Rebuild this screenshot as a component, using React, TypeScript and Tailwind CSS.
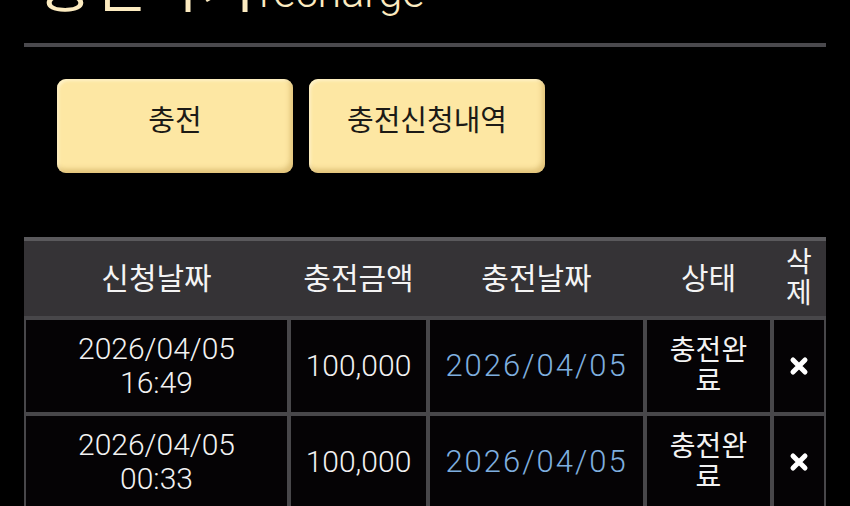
import React from "react";

const font = { fontFamily: 'Roboto, "Noto Sans CJK KR", sans-serif' };

function XIcon() {
  return (
    <svg width="20" height="20" viewBox="0 0 20 20">
      <path d="M4 4 L16 16 M16 4 L4 16" stroke="#ffffff" strokeWidth="5" strokeLinecap="round" fill="none" />
    </svg>
  );
}

const rows = [
  { date: "2026/04/05", time: "16:49", amount: "100,000", done: "2026/04/05", status: "충전완료" },
  { date: "2026/04/05", time: "00:33", amount: "100,000", done: "2026/04/05", status: "충전완료" },
];

const cols = "grid grid-cols-[261px_135px_213px_123px_50px] gap-x-[4px]";

export default function App() {
  return (
    <div className="w-[850px] h-[506px] overflow-hidden bg-black" style={font}>
      <div className="px-[24px]">
        <div className="-mt-[84px] h-[127px] flex items-end pb-[21px] pl-[14px] text-[#fcebc0]">
          <div className="flex items-baseline">
            <span className="text-[59px] leading-[60px]">충전하기</span>
            <span className="text-[43px] leading-[60px] font-light ml-[4px]">recharge</span>
          </div>
        </div>
        <div className="h-[4px] bg-[#4a494d]" />
        <div className="flex gap-[16px] pl-[33px] mt-[32px]">
          {["충전", "충전신청내역"].map((t) => (
            <div
              key={t}
              className="w-[236px] h-[94px] rounded-[9px] bg-[#fde7a3] flex items-center justify-center pb-[8px] text-[29px] text-[#1c1a16] shadow-[inset_-3px_-4px_5px_rgba(190,150,70,0.45),inset_2px_2px_3px_rgba(255,250,225,0.6)]"
            >
              {t}
            </div>
          ))}
        </div>
        <div className="mt-[64px] bg-[#48474a] w-[802px]">
          <div className={`${cols} px-[2px] h-[79px] bg-[#353336] border-t-[4px] border-[#5a595c] text-[30px] text-[#f4f4f4] items-center text-center`}>
            <div>신청날짜</div>
            <div>충전금액</div>
            <div>충전날짜</div>
            <div>상태</div>
            <div className="text-[28px] leading-[31px] pb-[2px]">
              삭<br />제
            </div>
          </div>
          <div className="px-[2px] pt-[4px] flex flex-col gap-[4px]">
            {rows.map((r, i) => (
              <div key={i} className={`${cols} h-[92px] text-[#f2f2f2] font-light`}>
                <div className="bg-[#050305] flex flex-col items-center justify-center text-[30px] leading-[34px]">
                  <div>{r.date}</div>
                  <div>{r.time}</div>
                </div>
                <div className="bg-[#050305] flex items-center justify-center text-[30px] leading-[34px]">
                  {r.amount}
                </div>
                <div className="bg-[#050305] flex items-center justify-center text-[31px] leading-[34px] text-[#7eaedf] tracking-[2px]">
                  {r.done}
                </div>
                <div className="bg-[#050305] flex items-center justify-center text-center">
                  <div className="w-[90px] text-[28px] leading-[31px] break-all font-normal">{r.status}</div>
                </div>
                <div className="bg-[#050305] flex items-center justify-center">
                  <XIcon />
                </div>
              </div>
            ))}
          </div>
        </div>
      </div>
    </div>
  );
}
